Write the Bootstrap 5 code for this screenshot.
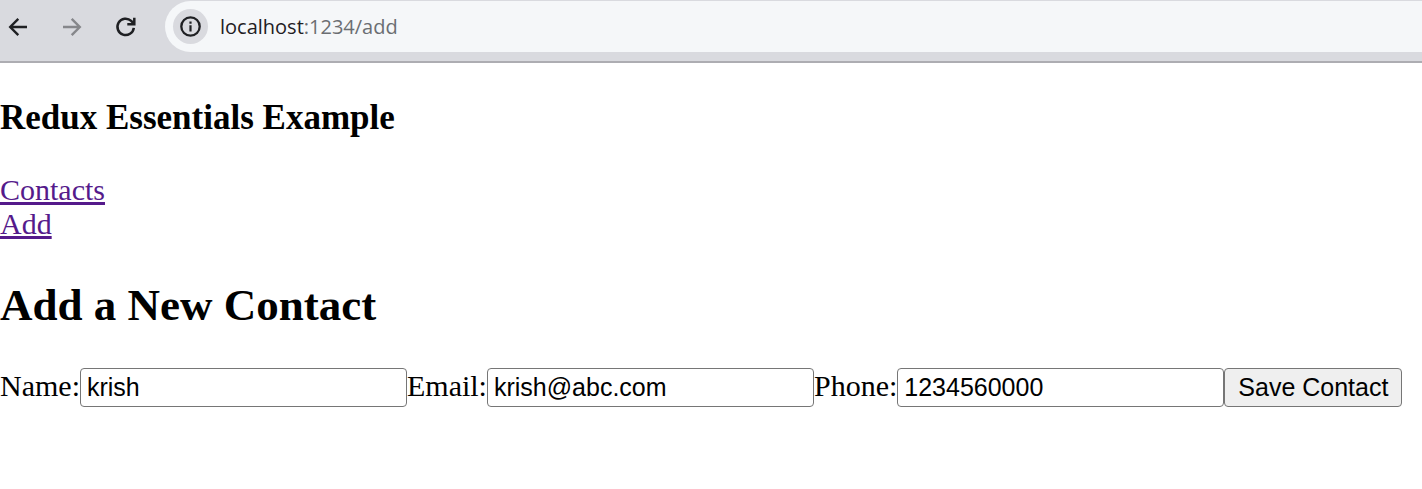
<!DOCTYPE html>
<html lang="en">
<head>
<meta charset="utf-8">
<meta name="viewport" content="width=device-width, initial-scale=1">
<title>Redux Essentials Example</title>
<link href="https://cdn.jsdelivr.net/npm/bootstrap@5.3.0/dist/css/bootstrap.min.css" rel="stylesheet">
<style>
  body { color: #000; background: #fff; font-family: "Liberation Serif", "Times New Roman", serif; font-size: 30px; line-height: 34px; }
  .browser-bar { background: #d9dadf; border-bottom: 2px solid #adadb2; padding-top: 1px; padding-bottom: 9px; }
  .tool-group { width: 165px; padding-left: 4px; gap: 26px; }
  .tool-btn { width: 28px; height: 28px; color: #1f2023; }
  .tool-btn:disabled { color: #86878b; border: 0; opacity: 1; }
  .address { height: 51px; padding-left: 8px; background: #f5f7f9; border-radius: 26px 0 0 26px; }
  .info-btn { width: 35px; height: 35px; background: #d9dadf; color: #1f2023; }
  .url-text { margin-left: 12px; font-family: "Open Sans", sans-serif; font-size: 20px; line-height: 28px; color: #6b6e72; }
  .url-text span { color: #1f2023; }
  .site-title { font-size: 35px; line-height: 40px; margin: 35px 0; }
  .page-title { font-size: 45px; line-height: 52px; margin: 38px 0 37px; }
  .site-link { color: #551a8b; text-decoration-thickness: 3px; text-underline-offset: 2px; }
  .form-control, .save-btn { height: 39px; border: 1px solid #767676; border-radius: 4px; font-family: "Liberation Sans", Arial, sans-serif; font-size: 25px; line-height: 29px; color: #000; }
  .form-control { flex: 0 1 327px; width: 327px; min-width: 0; padding: 4px 6px; }
  .save-btn { background: #efefef; padding: 4px 13px; }
</style>
</head>
<body>
<header class="browser-bar d-flex align-items-center">
  <div class="tool-group d-flex align-items-center flex-shrink-0">
    <button type="button" class="tool-btn btn p-0 border-0 d-flex" aria-label="Back">
      <svg width="28" height="28" viewBox="0 0 28 28" fill="none" stroke="currentColor" stroke-width="2.4"><path d="M23 14H6.500M14.300 5.800L6.200 14l8.100 8.200"/></svg>
    </button>
    <button type="button" class="tool-btn btn p-0 border-0 d-flex" aria-label="Forward" disabled>
      <svg width="28" height="28" viewBox="0 0 28 28" fill="none" stroke="currentColor" stroke-width="2.4"><path d="M5 14h16.500M13.700 5.800l8.100 8.200-8.100 8.200"/></svg>
    </button>
    <button type="button" class="tool-btn btn p-0 border-0 d-flex" aria-label="Reload">
      <svg width="28" height="28" viewBox="0 0 28 28" fill="none" stroke="currentColor" stroke-width="2.500"><path d="M21.800 14.800A8.200 8.200 0 1 1 19.200 7.800L22 10.800M22.300 4.800v6.500h-7"/></svg>
    </button>
  </div>
  <div class="address d-flex align-items-center flex-grow-1">
    <button type="button" class="info-btn btn p-0 border-0 rounded-circle d-flex align-items-center justify-content-center" aria-label="Site information">
      <svg width="23" height="23" viewBox="0 0 23 23" fill="none" stroke="currentColor"><circle cx="11.500" cy="11.500" r="9.200" stroke-width="2.300"/><path d="M11.500 10.300v6.200M11.500 6.500v2.200" stroke-width="2.200"/></svg>
    </button>
    <div class="url-text"><span>localhost</span>:1234/add</div>
  </div>
</header>
<main>
  <h3 class="site-title fw-bold">Redux Essentials Example</h3>
  <nav class="d-flex flex-column align-items-start">
    <a class="site-link" href="#contacts">Contacts</a>
    <a class="site-link" href="#add">Add</a>
  </nav>
  <h1 class="page-title fw-bold">Add a New Contact</h1>
  <form class="d-flex align-items-baseline">
    <label for="name">Name:</label><input class="form-control" id="name" type="text" value="krish">
    <label for="email">Email:</label><input class="form-control" id="email" type="text" value="krish@abc.com">
    <label for="phone">Phone:</label><input class="form-control" id="phone" type="text" value="1234560000">
    <button type="button" class="save-btn flex-shrink-0">Save Contact</button>
  </form>
</main>
<script src="https://cdn.jsdelivr.net/npm/bootstrap@5.3.0/dist/js/bootstrap.bundle.min.js"></script>
</body>
</html>
